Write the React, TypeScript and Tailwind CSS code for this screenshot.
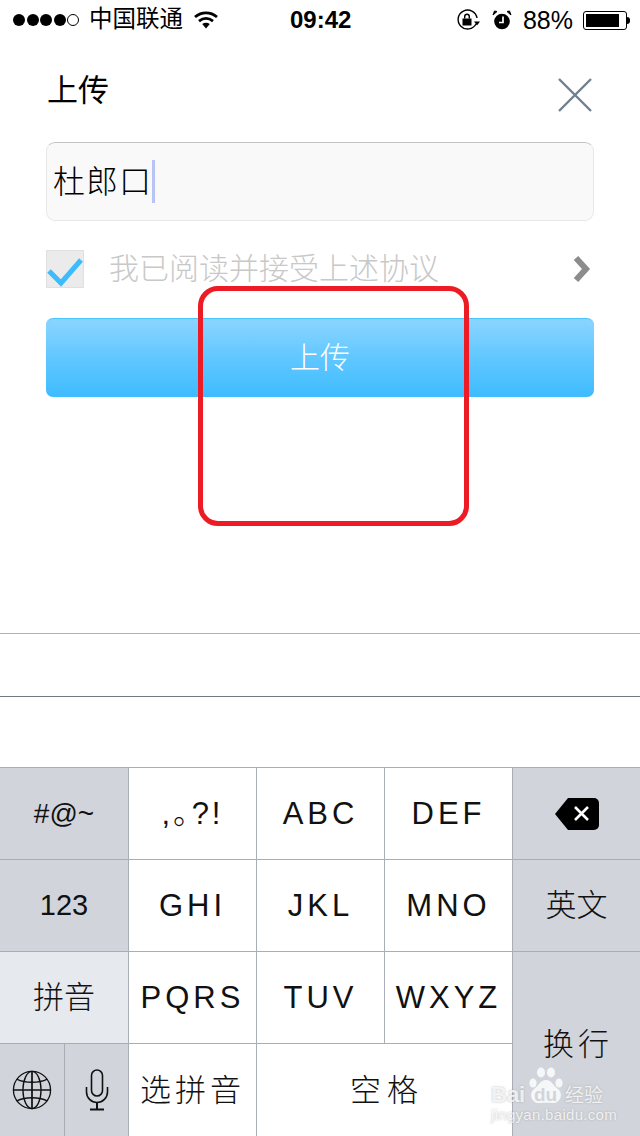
import React from 'react';

const cjk = "font-['Liberation_Sans','Noto_Sans_CJK_SC',sans-serif]";

const Key = ({ label, className = '' }: { label: React.ReactNode; className?: string }) => (
    <div className={`flex items-center justify-center border-t border-l border-[#a9adb8] font-light leading-none text-[#111] ${className}`}>
        {label}
    </div>
);

const Wifi = () => (
    <svg width="24" height="18" viewBox="0 0 24 18" className="fill-none stroke-black">
        <path d="M1 6C7.5 0.5 16.5 0.5 23 6" strokeWidth="2.8" />
        <path d="M5 10.2C9.5 6.6 14.5 6.6 19 10.2" strokeWidth="2.8" />
        <path d="M8.2 13L12 17.5L15.8 13C13.5 11.2 10.5 11.2 8.2 13Z" className="fill-black" strokeWidth="0" />
    </svg>
);

const RotationLock = () => (
    <svg width="24" height="24" viewBox="0 0 24 24" className="fill-none stroke-black">
        <path d="M20 16A9.5 9.5 0 1 1 21 10" strokeWidth="1.4" />
        <path d="M18 13.5H24L21 17.5Z" className="fill-black" strokeWidth="0" />
        <rect x="6.5" y="10.5" width="9" height="7" className="fill-black" strokeWidth="0" />
        <path d="M8.7 10.5V8.5A2.3 2.3 0 0 1 13.3 8.5V10.5" strokeWidth="1.4" />
    </svg>
);

const Alarm = () => (
    <svg width="20" height="20" viewBox="0 0 20 20">
        <circle cx="10" cy="11.5" r="7.8" fill="#000" />
        <path d="M1 5L5 1.5L2.5 1Z M19 5L15 1.5L17.5 1Z" fill="#000" stroke="#000" strokeWidth="1" />
        <path d="M11 6.5V12.5H7" fill="none" stroke="#fff" strokeWidth="1.7" />
    </svg>
);

const Battery = () => (
    <div className="flex items-center">
        <div className="flex h-[19px] w-[44px] rounded-[3px] border border-black p-[2px]">
            <div className="h-full w-[88%] bg-black" />
        </div>
        <div className="h-[7px] w-[3px] rounded-r-sm bg-black" />
    </div>
);

const Globe = () => (
    <svg width="40" height="40" viewBox="0 0 42 42" className="fill-none stroke-[#111]" strokeWidth="1.4">
        <circle cx="21" cy="21" r="19.5" />
        <ellipse cx="21" cy="21" rx="9.5" ry="19.5" />
        <path d="M21 1.5V40.5M1.5 21H40.5" strokeWidth="1.8" />
        <path d="M5 9.5C14 14 28 14 37 9.5M5 32.5C14 28 28 28 37 32.5" />
    </svg>
);

const Mic = () => (
    <svg width="24" height="42" viewBox="0 0 24 42" className="fill-none stroke-[#111]" strokeWidth="1.6">
        <rect x="6.5" y="1" width="11" height="26" rx="5.5" />
        <path d="M1.5 18V23A10.5 10.5 0 0 0 22.5 23V18" />
        <path d="M12 33.5V40.5M5 40.5H19" strokeWidth="2" />
    </svg>
);

const Backspace = () => (
    <svg width="44" height="32" viewBox="0 0 44 32">
        <path d="M13 0H39A5 5 0 0 1 44 5V27A5 5 0 0 1 39 32H13L0 16Z" fill="#000" />
        <path d="M20 9L33 22M33 9L20 22" stroke="#fff" strokeWidth="2.6" fill="none" />
    </svg>
);

const Paw = () => (
    <svg width="36" height="38" viewBox="0 0 36 38" className="fill-white/80">
        <ellipse cx="5" cy="16" rx="3.6" ry="4.6" />
        <ellipse cx="13" cy="5.5" rx="4" ry="5" />
        <ellipse cx="23" cy="5.5" rx="4" ry="5" />
        <ellipse cx="31" cy="16" rx="3.6" ry="4.6" />
        <path d="M18 13C24 13 25 19 30 22C36 27 32 37 24 36C20 35.500 16 35.500 12 36C4 37 0 27 6 22C11 19 12 13 18 13Z" />
    </svg>
);

export default function App() {
    return (
        <div className={`relative flex h-[1136px] w-[640px] flex-col overflow-hidden bg-white ${cjk}`}>
            {/* Status bar */}
            <div className="flex h-10 shrink-0 items-center pl-[13px] pr-[10px] text-black">
                <div className="flex w-[277px] items-center">
                    <div className="flex items-center gap-[1.5px]">
                        {[0, 1, 2, 3].map((i) => (
                            <span key={i} className="h-3 w-3 rounded-full bg-black" />
                        ))}
                        <span className="h-3 w-3 rounded-full border border-black" />
                    </div>
                    <span className="ml-[10px] text-[23.500px] leading-none">中国联通</span>
                    <span className="ml-[11px]"><Wifi /></span>
                </div>
                <span className="text-[24px] font-bold leading-none">09:42</span>
                <div className="ml-auto flex items-center">
                    <RotationLock />
                    <span className="ml-[12px]"><Alarm /></span>
                    <span className="ml-[11px] text-[25px] leading-none">88%</span>
                    <span className="ml-[10px]"><Battery /></span>
                </div>
            </div>

            {/* Title */}
            <div className="flex h-[102px] shrink-0 items-start justify-between pl-[47px] pr-[48px] pt-[31px]">
                <span className="text-[31px] leading-10 text-black">上传</span>
                <svg width="34" height="34" viewBox="0 0 34 34" className="mt-[7px] fill-none stroke-[#71808f]" strokeWidth="2.4">
                    <path d="M1 1L33 33M33 1L1 33" />
                </svg>
            </div>

            {/* Form */}
            <div className="flex shrink-0 flex-col px-[46px]">
                <div className="flex h-[79px] items-center rounded-[9px] border border-[#e8e8e8] border-t-[#c4c4c4] bg-[#f9f9f9] pl-[6px]">
                    <span className="text-[32px] font-light leading-none tracking-[1px] text-black">杜郎口</span>
                    <span className="h-[43px] w-[3px] bg-[#b9c4f5]" />
                </div>
                <div className="mt-[28px] flex h-[39px] items-center">
                    <div className="relative h-[38px] w-[38px] shrink-0 border border-[#e0e0e0] bg-[#ebebeb]">
                        <svg width="36" height="30" viewBox="0 0 36 30" className="absolute left-0 top-[6px] fill-none stroke-[#3cbcff]" strokeWidth="5">
                            <path d="M2 14L14 26L34 3" />
                        </svg>
                    </div>
                    <span className="ml-[25px] text-[30px] font-light leading-none text-[#c8c8c8]">我已阅读并接受上述协议</span>
                    <svg width="18" height="26" viewBox="0 0 18 26" className="ml-auto mr-[3px] fill-none stroke-[#8c8c8c]" strokeWidth="6">
                        <path d="M3 2L13 13L3 24" />
                    </svg>
                </div>
                <div className="mt-[30px] flex h-[79px] items-center justify-center rounded-[7px] border-t border-[#4cc4ff] bg-gradient-to-b from-[#8ad5ff] via-[#60c7ff] to-[#3cbcff] text-[30px] font-light leading-none text-white">
                    上传
                </div>
            </div>

            {/* Candidate bar */}
            <div className="mt-[236px] h-[64px] shrink-0 border-t border-b border-t-[#aab2bd] border-b-[#6f7a85]" />
            <div className="h-[70px] shrink-0 bg-white" />

            {/* Keyboard */}
            <div className="grid h-[369px] shrink-0 grid-cols-[128px_128px_128px_128px_128px] grid-rows-[92px_92px_92px_93px]">
                <Key label="#@~" className="border-l-0 bg-[#d1d5db] text-[28px]" />
                <Key label=",｡?!" className="bg-white text-[31px] tracking-[3px]" />
                <Key label="ABC" className="bg-white text-[31px] tracking-[4px]" />
                <Key label="DEF" className="bg-white text-[31px] tracking-[4px]" />
                <Key label={<Backspace />} className="bg-[#d1d5db]" />

                <Key label="123" className="border-l-0 bg-[#d1d5db] text-[29px]" />
                <Key label="GHI" className="bg-white text-[31px] tracking-[4px]" />
                <Key label="JKL" className="bg-white text-[31px] tracking-[4px]" />
                <Key label="MNO" className="bg-white text-[31px] tracking-[4px]" />
                <Key label="英文" className="bg-[#d1d5db] text-[31px]" />

                <Key label="拼音" className="border-l-0 bg-[#e6e9ee] text-[31px]" />
                <Key label="PQRS" className="bg-white text-[31px] tracking-[4px]" />
                <Key label="TUV" className="bg-white text-[31px] tracking-[4px]" />
                <Key label="WXYZ" className="bg-white text-[31px] tracking-[4px]" />
                <Key label="换行" className="row-span-2 bg-[#d1d5db] pl-[3px] text-[31px] tracking-[4px]" />

                <div className="grid grid-cols-2 border-t border-[#a9adb8] bg-[#d1d5db]">
                    <div className="flex items-center justify-center"><Globe /></div>
                    <div className="flex items-center justify-center border-l border-[#a9adb8]"><Mic /></div>
                </div>
                <Key label="选拼音" className="bg-white text-[31px] tracking-[4px]" />
                <Key label="空格" className="col-span-2 bg-white pl-[5px] text-[31px] tracking-[6px]" />
            </div>

            {/* Red annotation */}
            <div className="absolute left-[198px] top-[286px] h-[240px] w-[271px] rounded-[20px] border-[5px] border-[#ed1c24]" />

            {/* Watermark */}
            <div className="absolute left-[491px] top-[1067px] h-[56px] w-[116px] text-white/80 [text-shadow:0_0_2px_rgba(130,130,130,0.6)]">
                <span className="absolute left-0 top-[17px] text-[22px] font-bold leading-none">Bai</span>
                <div className="absolute left-[37px] top-0"><Paw /></div>
                <span className="absolute left-[43px] top-[18px] text-[19px] font-bold leading-none text-[#d1d5db] [text-shadow:none]">du</span>
                <span className="absolute left-[74px] top-[19px] text-[19px] leading-none">经验</span>
                <span className="absolute left-0 top-[40px] whitespace-nowrap text-[15px] leading-none tracking-[0.3px]">jingyan.baidu.com</span>
            </div>
        </div>
    );
}
